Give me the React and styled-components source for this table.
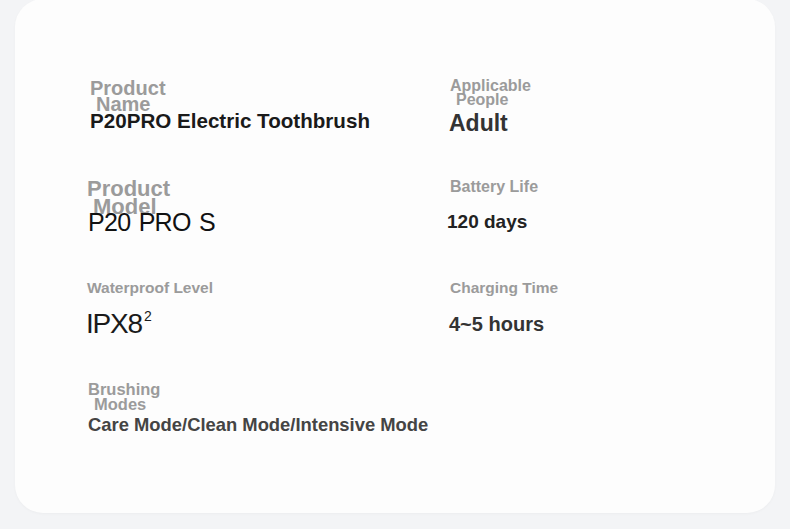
import React from "react"
import styled, { createGlobalStyle } from "styled-components"

const GlobalStyle = createGlobalStyle`
  html, body {
    margin: 0;
    padding: 0;
    background: #f3f4f6;
    font-family: "Liberation Sans", Arial, sans-serif;
  }
`

const Page = styled.div`
  width: 790px;
  height: 529px;
  padding: 0 15px 16px;
  box-sizing: border-box;
  overflow: hidden;
`

const Card = styled.div`
  height: 514px;
  margin-top: -1px;
  box-sizing: border-box;
  background: #fdfdfd;
  border-radius: 28px;
  box-shadow: 0 1px 3px rgba(0, 0, 0, 0.03);
  padding: 81px 0 0 73px;
`

const Grid = styled.div`
  display: grid;
  grid-template-columns: 362px 1fr;
  grid-auto-rows: 100px;
`

const Item = styled.div`
  display: flex;
  flex-direction: column;
  align-items: flex-start;
  margin-left: ${(p) => p.dx || 0}px;
  margin-top: ${(p) => p.dy || 0}px;
`

const Label = styled.div`
  color: #9b9b9b;
  font-weight: bold;
  font-size: ${(p) => p.size}px;
  line-height: ${(p) => p.lh}px;
`

const LabelLine = styled.div`
  padding-left: ${(p) => p.indent || 0}px;
  white-space: nowrap;
`

const Value = styled.div`
  color: ${(p) => p.color || "#222"};
  font-weight: ${(p) => (p.thin ? 400 : 700)};
  font-size: ${(p) => p.size}px;
  line-height: ${(p) => p.size}px;
  letter-spacing: ${(p) => p.ls || 0}px;
  word-spacing: ${(p) => p.ws || 0}px;
  margin-top: ${(p) => p.gap || 0}px;
  margin-left: ${(p) => p.dx || 0}px;
  white-space: nowrap;
`

const Sup = styled.sup`
  font-size: 14px;
  line-height: 0;
  vertical-align: 12px;
  margin-left: 2px;
  letter-spacing: 0;
`

const specs = [
  {
    label: ["Product", "Name"],
    size: 20,
    lh: 16,
    dx: 2,
    value: "P20PRO Electric Toothbrush",
    vsize: 20.6,
    gap: -1,
    color: "#1a1a1a",
  },
  {
    label: ["Applicable", "People"],
    size: 16,
    lh: 14,
    dx: 0,
    dy: -1,
    value: "Adult",
    vsize: 23,
    gap: 5,
    vdx: -1,
    color: "#333",
  },
  {
    label: ["Product", "Model"],
    size: 22,
    lh: 18,
    dx: -1,
    value: "P20 PRO S",
    vsize: 25,
    gap: -6,
    vdx: 1,
    thin: true,
    ls: -0.7,
    ws: 2,
    color: "#111",
  },
  {
    label: ["Battery Life"],
    size: 16,
    lh: 16,
    dx: 0,
    dy: -1,
    value: "120 days",
    vsize: 19,
    gap: 17,
    vdx: -3,
    color: "#222",
  },
  {
    label: ["Waterproof Level"],
    size: 15.5,
    lh: 16,
    dx: -1,
    value: "IPX8",
    sup: "2",
    vsize: 28,
    gap: 14,
    vdx: -1,
    thin: true,
    ls: -1.2,
    color: "#1a1a1a",
  },
  {
    label: ["Charging Time"],
    size: 15.5,
    lh: 16,
    dx: 0,
    value: "4~5 hours",
    vsize: 20,
    gap: 18,
    vdx: -1,
    color: "#333",
  },
  {
    label: ["Brushing", "Modes"],
    size: 16.5,
    lh: 15,
    dx: 0,
    dy: 2,
    value: "Care Mode/Clean Mode/Intensive Mode",
    vsize: 18.4,
    gap: 4,
    color: "#444",
  },
]

const Spec = ({ spec }) => (
  <Item dx={spec.dx} dy={spec.dy}>
    <Label size={spec.size} lh={spec.lh}>
      {spec.label.map((line, i) => (
        <LabelLine key={line} indent={i > 0 ? 6 : 0}>
          {line}
        </LabelLine>
      ))}
    </Label>
    <Value
      size={spec.vsize}
      gap={spec.gap}
      dx={spec.vdx}
      thin={spec.thin}
      ls={spec.ls}
      ws={spec.ws}
      color={spec.color}
    >
      {spec.value}
      {spec.sup && <Sup>{spec.sup}</Sup>}
    </Value>
  </Item>
)

const App = () => {
  return (
    <Page>
      <GlobalStyle />
      <Card>
        <Grid>
          {specs.map((spec) => (
            <Spec key={spec.label.join(" ")} spec={spec} />
          ))}
        </Grid>
      </Card>
    </Page>
  )
}

export default App
